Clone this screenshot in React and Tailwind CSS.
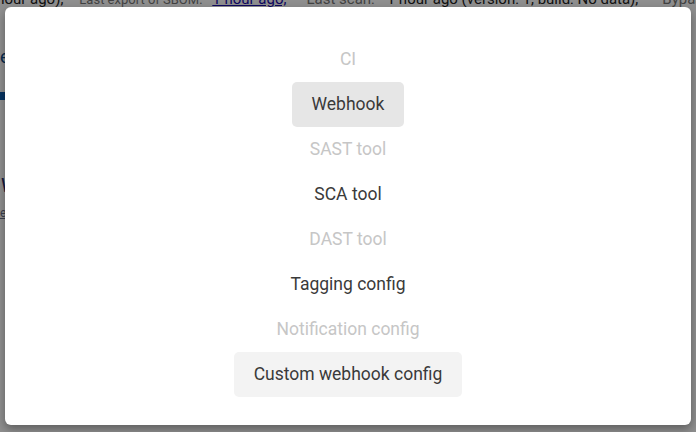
const ITEMS = [
  { label: 'CI', disabled: true },
  { label: 'Webhook', active: true },
  { label: 'SAST tool', disabled: true },
  { label: 'SCA tool' },
  { label: 'DAST tool', disabled: true },
  { label: 'Tagging config' },
  { label: 'Notification config', disabled: true },
  { label: 'Custom webhook config', focused: true },
];

export default function App() {
  return (
    <div className="relative h-[432px] w-[696px] overflow-hidden bg-white font-['Roboto',sans-serif]">
      {/* page behind the dialog */}
      <div className="flex flex-col">
        <div className="-mt-[9px] flex h-[16px] items-center whitespace-nowrap text-[15px] leading-none">
          <span className="-ml-[16px] text-[#222]">1 hour ago),</span>
          <span className="ml-[16px] text-[13px] text-[#777]">Last export of SBOM:</span>
          <span className="ml-[10px] text-[#1a0dab] underline">1 hour ago,</span>
          <span className="ml-[20px] text-[#777]">Last scan:</span>
          <span className="ml-[12px] text-[#222]">1 hour ago (version: 1, build: No data),</span>
          <span className="ml-[24px] text-[#777]">Bypass</span>
        </div>
        <div className="mt-[36px] text-[18px] text-[#0b4a8b]">e</div>
        <div className="mt-[22px] h-[8px] w-[60px] bg-[#0b5cad]" />
        <div className="mt-[70px] text-[20px] italic text-[#1f2a6b]">V</div>
        <div className="mt-[4px] text-[12px] text-[#6a6f8a] underline">ex</div>
      </div>

      {/* overlay + dialog */}
      <div className="absolute inset-0 flex bg-black/[0.44] px-[5px] pb-[7px] pt-[7px]">
        <div className="flex flex-1 flex-col items-center rounded-[6px] bg-white pb-[28px] pt-[30px] shadow-[0_4px_10px_rgba(0,0,0,0.35)]">
          {ITEMS.map(item => (
            <div
              key={item.label}
              className={`flex h-[45px] items-center rounded-[5px] px-5 text-[17.5px] ${
                item.disabled ? 'text-[#c6c6c6]' : 'text-[#3a3a3a]'
              } ${item.active ? 'bg-[#e6e6e6]' : ''} ${item.focused ? 'bg-[#f3f3f3]' : ''}`}
            >
              {item.label}
            </div>
          ))}
        </div>
      </div>
    </div>
  );
}
